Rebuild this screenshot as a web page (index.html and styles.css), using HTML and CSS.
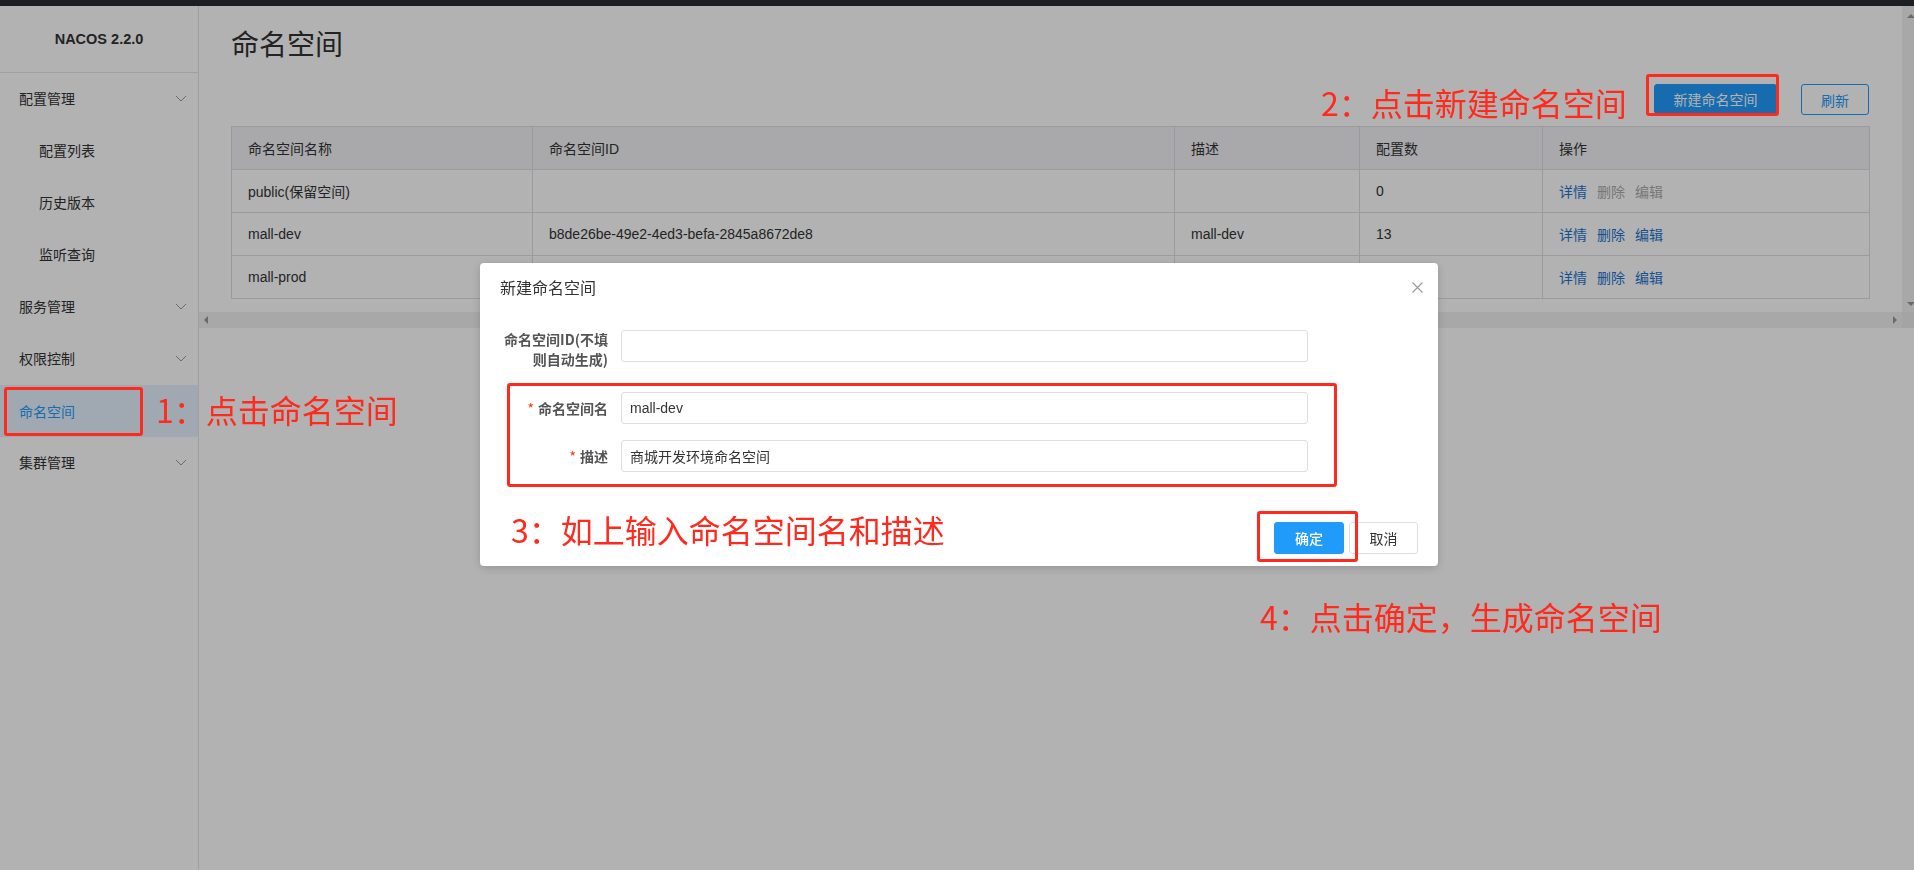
FILE: index.html
```html
<!DOCTYPE html>
<html lang="zh-CN">
<head>
<meta charset="utf-8">
<title>命名空间 - Nacos</title>
<link rel="stylesheet" href="styles.css">
</head>
<body>
<div class="app">
  <div class="topbar"></div>
  <div class="layout">
    <aside class="sidebar">
      <div class="brand">NACOS 2.2.0</div>
      <nav class="menu">
        <div class="menu-item">配置管理<svg class="chev" width="12" height="7" viewBox="0 0 12 7"><polyline points="1,1 6,6 11,1" fill="none" stroke="#999" stroke-width="1"/></svg></div>
        <div class="menu-item sub">配置列表</div>
        <div class="menu-item sub">历史版本</div>
        <div class="menu-item sub">监听查询</div>
        <div class="menu-item">服务管理<svg class="chev" width="12" height="7" viewBox="0 0 12 7"><polyline points="1,1 6,6 11,1" fill="none" stroke="#999" stroke-width="1"/></svg></div>
        <div class="menu-item">权限控制<svg class="chev" width="12" height="7" viewBox="0 0 12 7"><polyline points="1,1 6,6 11,1" fill="none" stroke="#999" stroke-width="1"/></svg></div>
        <div class="menu-item active">命名空间</div>
        <div class="menu-item">集群管理<svg class="chev" width="12" height="7" viewBox="0 0 12 7"><polyline points="1,1 6,6 11,1" fill="none" stroke="#999" stroke-width="1"/></svg></div>
      </nav>
    </aside>
    <main class="main">
      <div class="scroll-area">
        <div class="scroll-row">
          <div class="content">
            <h1 class="page-title">命名空间</h1>
            <div class="toolbar">
              <button class="btn btn-primary btn-new">新建命名空间</button>
              <button class="btn btn-outline btn-refresh">刷新</button>
            </div>
            <table class="ns-table">
              <colgroup>
                <col class="c1"><col class="c2"><col class="c3"><col class="c4"><col class="c5">
              </colgroup>
              <thead>
                <tr><th>命名空间名称</th><th>命名空间ID</th><th>描述</th><th>配置数</th><th>操作</th></tr>
              </thead>
              <tbody>
                <tr><td>public(保留空间)</td><td></td><td></td><td>0</td><td><a class="link">详情</a><a class="link disabled">删除</a><a class="link disabled">编辑</a></td></tr>
                <tr><td>mall-dev</td><td>b8de26be-49e2-4ed3-befa-2845a8672de8</td><td>mall-dev</td><td>13</td><td><a class="link">详情</a><a class="link">删除</a><a class="link">编辑</a></td></tr>
                <tr><td>mall-prod</td><td></td><td></td><td></td><td><a class="link">详情</a><a class="link">删除</a><a class="link">编辑</a></td></tr>
              </tbody>
            </table>
          </div>
          <div class="vscroll"><span class="arr arr-up"></span><span class="arr arr-down"></span></div>
        </div>
        <div class="hscroll">
          <div class="htrack"><span class="arr arr-left"></span><span class="arr arr-right"></span></div>
          <div class="corner"></div>
        </div>
      </div>
    </main>
  </div>
</div>

<div class="mask"></div>

<div class="dialog">
  <div class="dialog-header">
    <span class="dialog-title">新建命名空间</span>
    <svg class="close" width="11" height="11" viewBox="0 0 11 11"><path d="M0.5 0.5 L10.5 10.5 M10.5 0.5 L0.5 10.5" stroke="#999" stroke-width="1.1" fill="none"/></svg>
  </div>
  <div class="dialog-body">
    <div class="form-row first">
      <label class="form-label two-line">命名空间ID(不填<br>则自动生成)</label>
      <div class="input"></div>
    </div>
    <div class="form-row">
      <label class="form-label"><span class="req">*</span>命名空间名</label>
      <div class="input">mall-dev</div>
    </div>
    <div class="form-row">
      <label class="form-label"><span class="req">*</span>描述</label>
      <div class="input">商城开发环境命名空间</div>
    </div>
  </div>
  <div class="dialog-footer">
    <button class="btn btn-primary btn-ok">确定</button>
    <button class="btn btn-normal btn-cancel">取消</button>
  </div>
</div>

<div class="annot box box1"></div>
<div class="annot box box2"></div>
<div class="annot box box3"></div>
<div class="annot box box4"></div>
<div class="annot note note1">1：点击命名空间</div>
<div class="annot note note2">2：点击新建命名空间</div>
<div class="annot note note3">3：如上输入命名空间名和描述</div>
<div class="annot note note4">4：点击确定，生成命名空间</div>
</body>
</html>
```
FILE: styles.css
```css
* { box-sizing: border-box; }
html, body { margin: 0; height: 100%; }
body {
  font-family: "Liberation Sans", "Noto Sans CJK SC", sans-serif;
  font-size: 14px;
  color: #333;
  background: #fff;
  overflow: hidden;
}

.app { height: 100vh; display: flex; flex-direction: column; }
.topbar { height: 6px; flex: none; background: #272b33; }
.layout { flex: 1; display: flex; min-height: 0; }

/* sidebar */
.sidebar { width: 199px; flex: none; border-right: 1px solid #e4e4e4; }
.brand {
  height: 67px;
  border-bottom: 1px solid #e4e4e4;
  display: flex; align-items: center; justify-content: center;
  font-weight: bold; font-size: 14.5px; color: #333;
}
.menu-item {
  height: 52px;
  display: flex; align-items: center; justify-content: space-between;
  padding: 0 11px 2px 19px;
  font-size: 14px; color: #333;
  font-family: "Noto Sans CJK SC", sans-serif;
}
.menu-item.sub { padding-left: 39px; }
.menu-item.active { background: #e5f3fe; color: #209bfa; padding-bottom: 0; }
.chev { display: block; }

/* main */
.main { flex: 1; min-width: 0; display: flex; flex-direction: column; }
.scroll-area { height: 322px; display: flex; flex-direction: column; }
.scroll-row { flex: 1; display: flex; min-height: 0; }
.content { flex: 1; min-width: 0; padding: 17px 33px 0 32px; }

.page-title {
  margin: 0;
  font-family: "Noto Sans CJK SC", sans-serif;
  font-size: 28px; font-weight: normal; line-height: 40px; color: #333;
}
.toolbar { display: flex; justify-content: flex-end; gap: 24px; margin-top: 21px; }

.btn {
  font-family: "Noto Sans CJK SC", sans-serif;
  font-size: 14px;
  border-radius: 3px;
  padding: 0;
  cursor: pointer;
  display: inline-flex; align-items: center; justify-content: center;
}
.btn-primary { background: #209bfa; border: 1px solid #209bfa; color: #fff; }
.btn-outline { background: #fff; border: 1px solid #209bfa; color: #209bfa; }
.btn-normal { background: #fff; border: 1px solid #dcdee3; color: #333; }
.btn-new { width: 123px; height: 30px; }
.btn-refresh { width: 68px; height: 31px; }

.ns-table {
  margin-top: 11px;
  width: 100%;
  table-layout: fixed;
  border-collapse: collapse;
  border: 1px solid #dcdee3;
}
.ns-table .c1 { width: 301px; }
.ns-table .c2 { width: 642px; }
.ns-table .c3 { width: 185px; }
.ns-table .c4 { width: 183px; }
.ns-table .c5 { width: 327px; }
.ns-table tr { height: 43px; }
.ns-table th, .ns-table td {
  padding: 0 16px 1px;
  text-align: left;
  font-weight: normal;
  border: 1px solid #dcdee3;
  white-space: nowrap;
  overflow: hidden;
}
.ns-table th { background: #f2f3f5; }
.link { color: #1c74d0; margin-right: 10px; }
.link.disabled { color: #ababab; }

/* fake scrollbars */
.vscroll {
  width: 12px; flex: none; background: #f1f1f1;
  display: flex; flex-direction: column; justify-content: space-between; align-items: flex-start;
  padding: 8px 0 6px 5px;
}
.hscroll { height: 16px; flex: none; display: flex; }
.htrack {
  flex: 1; background: #f1f1f1;
  display: flex; justify-content: space-between; align-items: center;
  padding: 0 5px 0 5px;
}
.corner { width: 12px; background: #ebebeb; }
.arr { width: 0; height: 0; display: block; }
.arr-up { border-left: 4px solid transparent; border-right: 4px solid transparent; border-bottom: 4px solid #999; }
.arr-down { border-left: 4px solid transparent; border-right: 4px solid transparent; border-top: 4px solid #999; }
.arr-left { border-top: 4px solid transparent; border-bottom: 4px solid transparent; border-right: 4px solid #999; }
.arr-right { border-top: 4px solid transparent; border-bottom: 4px solid transparent; border-left: 4px solid #999; }

/* mask */
.mask { position: fixed; inset: 0; background: rgba(0, 0, 0, 0.3); }

/* dialog */
.dialog {
  position: fixed;
  left: 480px; top: 263px;
  width: 958px; height: 303px;
  background: #fff;
  border-radius: 4px;
  box-shadow: 0 2px 10px rgba(0, 0, 0, 0.18);
  display: flex; flex-direction: column;
  font-family: "Noto Sans CJK SC", sans-serif;
}
.dialog-header {
  height: 48px;
  display: flex; align-items: center; justify-content: space-between;
  padding: 0 15px 0 20px;
}
.dialog-title { font-size: 16px; line-height: 24px; color: #333; }
.close { display: block; }
.dialog-body { flex: 1; padding: 19px 20px 0 20px; }
.form-row { display: flex; align-items: center; margin-bottom: 16px; }
.form-row.first { align-items: flex-start; margin-bottom: 23px; }
.form-label {
  width: 108px; margin-right: 13px; flex: none;
  text-align: right;
  font-size: 14px; font-weight: 700; color: #555;
  line-height: 20px;
}
.form-label.two-line { margin-top: -1px; }
.req { color: #ff3000; font-weight: normal; margin-right: 4px; }
.input {
  width: 687px; height: 32px;
  border: 1px solid #dcdee3; border-radius: 3px;
  padding: 0 8px;
  display: flex; align-items: center;
  font-size: 14px; color: #333;
  font-family: "Liberation Sans", "Noto Sans CJK SC", sans-serif;
}
.dialog-footer {
  display: flex; justify-content: flex-end; gap: 5px;
  padding: 12px 20px;
}
.btn-ok { width: 70px; height: 32px; font-weight: 500; }
.btn-cancel { width: 69px; height: 32px; }

/* annotations */
.annot { position: fixed; }
.box { border: 3px solid #ff2a1e; border-radius: 3px; }
.box1 { left: 4px; top: 387px; width: 139px; height: 49px; }
.box2 { left: 1646px; top: 74px; width: 133px; height: 42px; }
.box3 { left: 507px; top: 383px; width: 830px; height: 104px; }
.box4 { left: 1257px; top: 511px; width: 101px; height: 51px; }
.note {
  font-family: "Noto Sans CJK SC", sans-serif;
  color: #ff2a1e;
  font-size: 32px;
  line-height: 40px;
  white-space: nowrap;
}
.note1 { left: 156px; top: 389px; }
.note2 { left: 1321px; top: 82px; }
.note3 { left: 511px; top: 509px; }
.note4 { left: 1260px; top: 596px; }
```
